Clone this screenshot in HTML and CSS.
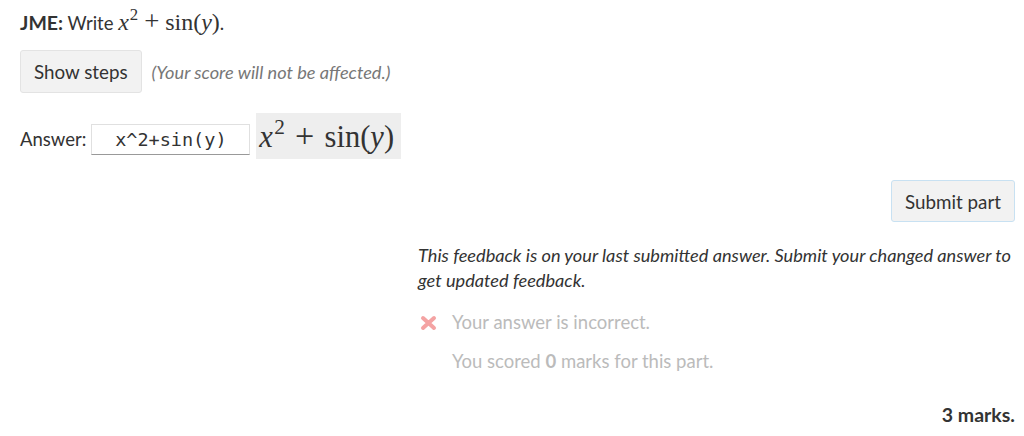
FILE: index.html
```html
<!doctype html>
<html lang="en">
  <head>
    <meta charset="utf-8">
    <title>JME part</title>
    <link rel="stylesheet" href="styles.css">
  </head>
  <body>
    <div class="part">
      <p class="prompt"><strong>JME:</strong> Write <span class="math"><i>x</i><sup>2</sup><span class="op">+</span>sin(<i>y</i>)</span>.</p>

      <div class="steps-row">
        <button class="btn">Show steps</button>
        <span class="steps-note">(Your score will not be affected.)</span>
      </div>

      <div class="answer-row">
        <label for="answer">Answer:</label>
        <input id="answer" class="answer-input" type="text" value="x^2+sin(y)">
        <span class="preview math"><i>x</i><sup>2</sup><span class="op">+</span>sin(<i>y</i>)</span>
      </div>

      <div class="submit-row">
        <button class="btn submit">Submit part</button>
      </div>

      <div class="feedback">
        <p class="stale">This feedback is on your last submitted answer. Submit your changed answer to get updated feedback.</p>
        <div class="feedback-line">
          <svg class="cross" width="17" height="16" viewBox="0 0 17 16">
            <path d="M3 3 L14 13 M14 3 L3 13" />
          </svg>
          <span>Your answer is incorrect.</span>
        </div>
        <div class="feedback-line">
          <span>You scored <strong>0</strong> marks for this part.</span>
        </div>
      </div>

      <div class="marks"><strong>3 marks.</strong></div>
    </div>
  </body>
</html>
```

FILE: styles.css
```css
body {
  margin: 0;
  font-family: Lato, "Noto Sans", sans-serif;
  font-size: 18.5px;
  color: #333;
  background: #fff;
}

.part {
  display: flex;
  flex-direction: column;
  padding: 8px 9px 0 20px;
}

p {
  margin: 0;
}

.prompt {
  line-height: 28px;
  height: 28px;
}

.prompt strong {
  font-size: 19.5px;
}

.math {
  font-family: "Liberation Serif", "DejaVu Serif", serif;
  font-size: 24px;
}

.math sup {
  font-size: 0.7em;
  line-height: 0;
  vertical-align: 0.6em;
  margin-left: 0.06em;
}

.math .op {
  font-size: 1.12em;
  line-height: 0;
  margin: 0 0.22em;
}

.steps-row {
  display: flex;
  align-items: center;
  gap: 10px;
  margin-top: 14px;
}

.btn {
  font-family: inherit;
  font-size: 18.8px;
  color: #333;
  background: #f2f2f2;
  border: 1px solid #e3e3e3;
  border-radius: 3px;
  padding: 0 13px;
  height: 43px;
}

.steps-note {
  font-style: italic;
  font-size: 18.2px;
  color: #777;
}

.answer-row {
  display: flex;
  align-items: flex-start;
  margin-top: 20px;
}

.answer-row label {
  margin: 15px 5px 0 0;
  line-height: 22px;
}

.answer-input {
  width: 159px;
  height: 31px;
  margin-top: 11px;
  box-sizing: border-box;
  border: 1px solid #e0e0e0;
  border-bottom: 1px solid #999;
  font-family: "DejaVu Sans Mono", monospace;
  font-size: 18.5px;
  color: #333;
  text-align: center;
  padding: 0;
}

.preview {
  margin-left: 6px;
  background: #eee;
  font-size: 30.5px;
  height: 46px;
  box-sizing: border-box;
  padding: 6px 7px 0 3px;
  line-height: 36px;
}

.preview .op {
  margin: 0 0.3em;
}

.submit-row {
  display: flex;
  justify-content: flex-end;
  margin-top: 21px;
}

.submit {
  border-color: #c8e1f2;
  height: 42px;
  padding: 0 13px;
}

.feedback {
  margin-left: 40%;
  margin-top: 21px;
}

.stale {
  font-style: italic;
  font-size: 18.2px;
  line-height: 25px;
}

.feedback-line {
  display: flex;
  align-items: center;
  color: #bbb;
  margin-top: 17px;
  line-height: 25px;
  padding-left: 34px;
  position: relative;
}

.feedback-line + .feedback-line {
  margin-top: 14px;
}

.cross {
  position: absolute;
  left: 2px;
  top: 5px;
}

.cross path {
  stroke: #f4a3a3;
  stroke-width: 4px;
  stroke-linecap: round;
  fill: none;
}

.marks {
  text-align: right;
  margin-top: 29px;
  font-size: 19.5px;
}
```
